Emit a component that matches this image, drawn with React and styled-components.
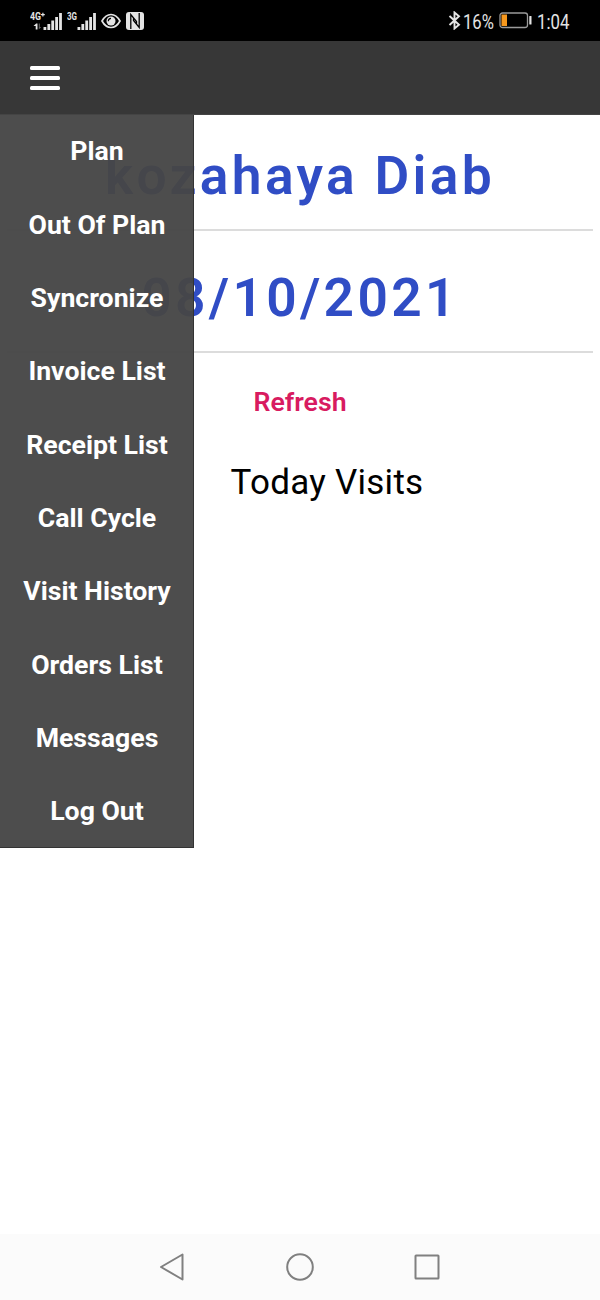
import styled, { createGlobalStyle } from "styled-components";

const GlobalStyle = createGlobalStyle`
  * {
    box-sizing: border-box;
  }

  body {
    margin: 0;
    background: #fff;
    font-family: Roboto, sans-serif;
  }
`;

const Screen = styled.div`
  display: flex;
  flex-direction: column;
  width: 600px;
  height: 1300px;
  overflow: hidden;
`;

const StatusBar = styled.div`
  display: flex;
  justify-content: space-between;
  height: 41px;
  padding: 0 30px;
  background: #000;
  color: #e4e4e4;
`;

const StatusGroup = styled.div`
  display: flex;
  align-items: center;
  gap: 5px;
  height: 41px;

  & svg {
    display: block;
  }
`;

const StatusText = styled.span`
  width: ${(p) => p.$width}px;
  margin-left: ${(p) => p.$offset || 0}px;
  padding-top: 2px;
  font-size: 20px;
  line-height: 24px;
  white-space: nowrap;

  & span {
    display: inline-block;
    transform: scaleX(${(p) => p.$stretch});
    transform-origin: left;
  }
`;

const Header = styled.header`
  display: flex;
  align-items: center;
  height: 74px;
  padding-left: 29.5px;
  background: #373737;
  border-bottom: 1px solid #444;
`;

const MenuButton = styled.button`
  display: flex;
  flex-direction: column;
  gap: 6px;
  padding: 0;
  border: 0;
  background: none;

  & span {
    width: 30.5px;
    height: 4px;
    border-radius: 1.5px;
    background: #fff;
  }
`;

const Content = styled.main`
  position: relative;
  flex: 1;
  padding: 0 7px;
  text-align: center;
`;

const Title = styled.h1`
  margin: 0;
  height: ${(p) => p.$height}px;
  padding-top: ${(p) => p.$top}px;
  border-bottom: 2px solid #dcdcdc;
  color: #304dc5;
  font-size: 53.33px;
  font-weight: 600;
  line-height: 62px;
  letter-spacing: 3.33px;
  white-space: nowrap;
`;

const RefreshLink = styled.a`
  display: block;
  margin-top: 33px;
  color: #d81b60;
  font-size: 26.67px;
  font-weight: 600;
  line-height: 32px;
`;

const Subtitle = styled.h2`
  margin: 44px 0 0 54px;
  color: #000;
  font-size: 35px;
  font-weight: 400;
  line-height: 42px;
  letter-spacing: 0.25px;
`;

const Menu = styled.nav`
  position: absolute;
  top: 0;
  left: 0;
  width: 194px;
  height: 733px;
  padding-top: 0.4px;
  background: rgba(70, 70, 70, 0.96);
  border-right: 1px solid #333;
  border-bottom: 1px solid #333;
`;

const MenuItem = styled.a`
  display: block;
  height: 73.33px;
  padding-left: 1px;
  color: #fff;
  font-size: 26.67px;
  font-weight: 700;
  line-height: 73.33px;
  white-space: nowrap;
`;

const NavBar = styled.footer`
  display: flex;
  align-items: center;
  justify-content: center;
  gap: 98px;
  height: 66px;
  background: #fbfbfb;

  & svg {
    display: block;
    fill: none;
    stroke: #808080;
    stroke-width: 2;
    stroke-linejoin: round;
  }
`;

const items = [
  "Plan",
  "Out Of Plan",
  "Syncronize",
  "Invoice List",
  "Receipt List",
  "Call Cycle",
  "Visit History",
  "Orders List",
  "Messages",
  "Log Out",
];

const bars = [3, 6, 9.5, 13, 17];

function Signal({ label, width, textWidth, arrows }) {
  return (
    <svg width={width} height="20" viewBox={`0 0 ${width} 20`} fill="#e4e4e4">
      <text
        x="0"
        y="8.8"
        fontFamily="Roboto, sans-serif"
        fontSize="11"
        fontWeight="700"
        textLength={textWidth}
        lengthAdjust="spacingAndGlyphs"
      >
        {label}
      </text>
      {arrows && (
        <g>
          <path d="M11 3h1.300V1.700h1.200V3h1.300v1.200h-1.300v1.300h-1.200V4.200H11z" />
          <path d="M3.500 15 6.200 12.500H7.500V18.500H5.700V15z" />
          <path d="M8.800 12.500h1v3.500h1.400l-2.400 2.500z" fill="#666" />
        </g>
      )}
      {bars.map((h, i) => (
        <rect
          key={h}
          x={width - 18.5 + i * 3.9}
          y={19 - h}
          width="2.8"
          height={h}
        />
      ))}
    </svg>
  );
}

function EyeIcon() {
  return (
    <svg width="20" height="16" viewBox="0 0 20 16" fill="none" stroke="#e4e4e4">
      <path
        d="M1 8C3.500 3.500 6.500 1.500 10 1.500S16.500 3.500 19 8c-2.500 4.500-5.500 6.500-9 6.500S3.500 12.500 1 8z"
        strokeWidth="1.7"
      />
      <circle cx="10" cy="8" r="4.5" fill="#e4e4e4" stroke="none" />
      <path d="M7.300 8.200C7.300 6.500 8.500 5.500 10 5.400" stroke="#000" strokeWidth="1.1" />
    </svg>
  );
}

// N split into two interlocking halves
function NfcIcon() {
  return (
    <svg width="18" height="18" viewBox="0 0 18 18">
      <rect width="18" height="18" rx="3" fill="#e4e4e4" />
      <path
        d="M4.800 17V2.500L10.500 9.500V12M13.200 1v14.500L7.500 8.500V6"
        fill="none"
        stroke="#000"
        strokeWidth="1.3"
      />
    </svg>
  );
}

function BluetoothIcon() {
  return (
    <svg width="13" height="19" viewBox="0 0 13 19" fill="none" stroke="#e4e4e4" strokeWidth="1.9">
      <path d="M1.500 5 11 13.700 6.500 17.500V1.500L11 5.300 1.500 14" />
    </svg>
  );
}

function BatteryIcon() {
  return (
    <svg width="33" height="17" viewBox="0 0 33 17">
      <rect x="1" y="1" width="27.5" height="14.5" rx="2.5" fill="none" stroke="#9b9b9b" strokeWidth="1.3" />
      <rect x="2.5" y="2.5" width="5.5" height="11.5" fill="#f7981d" />
      <rect x="30.3" y="4" width="2.2" height="8.5" rx="0.5" fill="#e4e4e4" />
    </svg>
  );
}

function App() {
  return (
    <>
      <GlobalStyle />
      <Screen>
        <StatusBar>
          <StatusGroup>
            <Signal label="4G" width={32} textWidth={11} arrows />
            <Signal label="3G" width={29} textWidth={10} />
            <EyeIcon />
            <NfcIcon />
          </StatusGroup>
          <StatusGroup>
            <BluetoothIcon />
            <StatusText $width={31} $offset={-3} $stretch={0.83}>
              <span>16%</span>
            </StatusText>
            <BatteryIcon />
            <StatusText $width={33} $stretch={0.84}>
              <span>1:04</span>
            </StatusText>
          </StatusGroup>
        </StatusBar>
        <Header>
          <MenuButton type="button" aria-label="Menu">
            <span />
            <span />
            <span />
          </MenuButton>
        </Header>
        <Content>
          <Title $height={116} $top={30}>
            kozahaya Diab
          </Title>
          <Title $height={122} $top={36}>
            08/10/2021
          </Title>
          <RefreshLink>Refresh</RefreshLink>
          <Subtitle>Today Visits</Subtitle>
          <Menu>
            {items.map((item) => (
              <MenuItem key={item}>{item}</MenuItem>
            ))}
          </Menu>
        </Content>
        <NavBar>
          <svg width="30" height="30" viewBox="0 0 30 30">
            <path d="M4 15 25.500 2.500v25z" />
          </svg>
          <svg width="30" height="30" viewBox="0 0 30 30">
            <circle cx="15" cy="15" r="12.8" />
          </svg>
          <svg width="30" height="30" viewBox="0 0 30 30">
            <rect x="2.5" y="3.5" width="23" height="23" rx="0.5" />
          </svg>
        </NavBar>
      </Screen>
    </>
  );
}

export default App;
